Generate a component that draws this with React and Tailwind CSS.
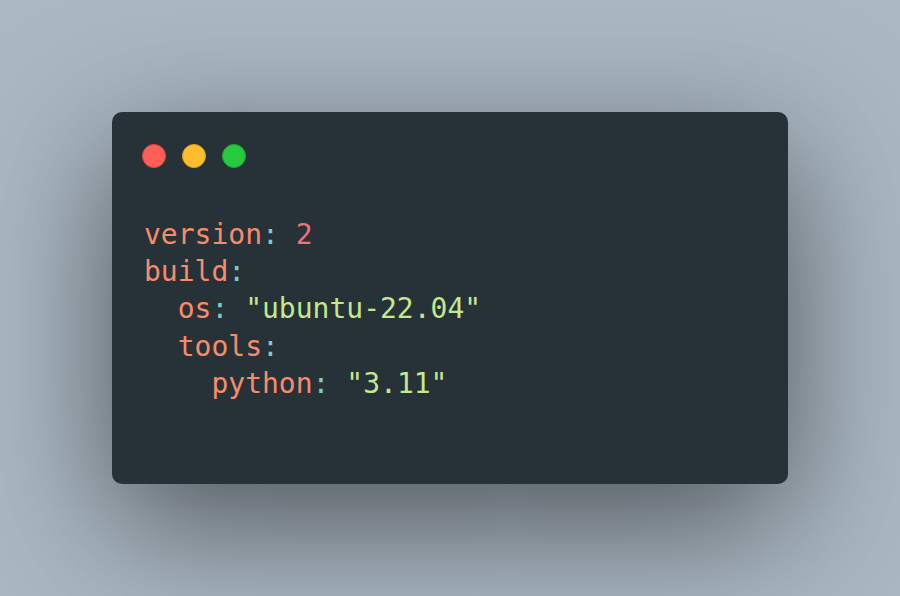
import React from 'react';

const lines = [
  [{ t: 'version', c: 'text-[#f78c6c]' }, { t: ':', c: 'text-[#80cbc4]' }, { t: ' ' }, { t: '2', c: 'text-[#f07178]' }],
  [{ t: 'build', c: 'text-[#f78c6c]' }, { t: ':', c: 'text-[#80cbc4]' }],
  [{ t: '  ' }, { t: 'os', c: 'text-[#f78c6c]' }, { t: ':', c: 'text-[#80cbc4]' }, { t: ' ' }, { t: '"ubuntu-22.04"', c: 'text-[#c3e88d]' }],
  [{ t: '  ' }, { t: 'tools', c: 'text-[#f78c6c]' }, { t: ':', c: 'text-[#80cbc4]' }],
  [{ t: '    ' }, { t: 'python', c: 'text-[#f78c6c]' }, { t: ':', c: 'text-[#80cbc4]' }, { t: ' ' }, { t: '"3.11"', c: 'text-[#c3e88d]' }],
];

const App = () => {
  return (
    <div className="w-full h-[596px] bg-[#abb8c3] flex items-center justify-center">
      <div className="w-[676px] h-[372px] bg-[#263238] rounded-[10px] shadow-[0_40px_136px_rgba(0,0,0,0.55)]">
        <div className="flex gap-[16px] pl-[30px] pt-[32px]">
          <span className="w-[24px] h-[24px] rounded-full bg-[#ff5f56] border border-[#e0443e]"></span>
          <span className="w-[24px] h-[24px] rounded-full bg-[#ffbd2e] border border-[#dea123]"></span>
          <span className="w-[24px] h-[24px] rounded-full bg-[#27c93f] border border-[#1aab29]"></span>
        </div>
        <pre className="mt-[48px] pl-[32px] text-[28px] leading-[37.24px] font-['DejaVu_Sans_Mono',monospace]">
          {lines.map((line, i) => (
            <div key={i}>
              {line.map((tok, j) => (
                <span key={j} className={tok.c}>{tok.t}</span>
              ))}
            </div>
          ))}
        </pre>
      </div>
    </div>
  );
};

export default App;
